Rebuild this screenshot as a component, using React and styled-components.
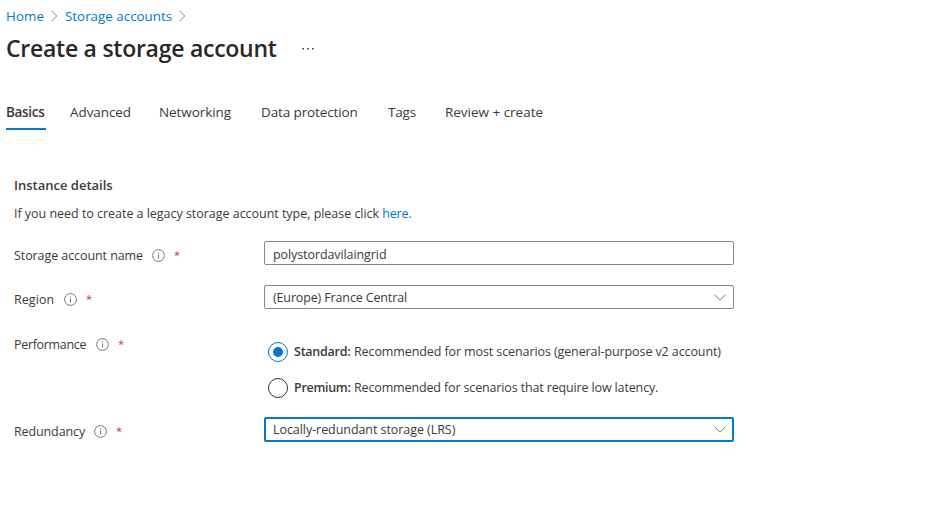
import React from 'react';
import styled, { createGlobalStyle } from 'styled-components';

const GlobalStyle = createGlobalStyle`
  * { box-sizing: border-box; }
  body {
    margin: 0;
    background: #fff;
    color: #3b3a39;
    font-family: "Open Sans", "Noto Sans", sans-serif;
    font-size: 12.5px;
  }
`;

const Page = styled.main`
  width: 948px;
  height: 506px;
  overflow: hidden;
`;

const Breadcrumb = styled.nav`
  display: flex;
  align-items: center;
  height: 20px;
  margin: 6px 0 0 6px;
  font-size: 13.3px;
`;

const Crumb = styled.a`
  width: ${(p) => p.$width}px;
  color: #0078d4;
  letter-spacing: ${(p) => p.$spacing || 0}px;
  line-height: 20px;
  white-space: nowrap;
`;

const CrumbArrow = styled.svg`
  width: 7px;
  height: 12px;
  margin: 0 7px;
  fill: none;
  stroke: #8a8886;
`;

const TitleBar = styled.header`
  display: flex;
  align-items: center;
  height: 36px;
  margin: 5px 0 0 6px;
`;

const Title = styled.h1`
  width: 296px;
  height: 36px;
  margin: 0;
  color: #292827;
  font-size: 23px;
  font-weight: 600;
  letter-spacing: -0.26px;
  line-height: 34px;
  white-space: nowrap;
`;

const MoreIcon = styled.svg`
  width: 12px;
  height: 4px;
  fill: #323130;
`;

const TabList = styled.div`
  display: flex;
  gap: 24px;
  height: 29px;
  margin: 34px 0 0 6px;
`;

const Tab = styled.div`
  width: ${(p) => p.$width}px;
  height: 29px;
  border-bottom: 2px solid ${(p) => (p.$active ? '#0078d4' : 'transparent')};
  font-size: 13.5px;
  font-weight: ${(p) => (p.$active ? 600 : 400)};
  letter-spacing: ${(p) => p.$spacing || 0}px;
  line-height: 22px;
  white-space: nowrap;
`;

const Form = styled.section`
  margin: 45px 0 0 14px;
  width: 720px;
`;

const SectionTitle = styled.h2`
  margin: 0;
  font-size: 13px;
  font-weight: 600;
  line-height: 20px;
`;

const Hint = styled.p`
  margin: 9px 0 17px;
  line-height: 20px;
  letter-spacing: -0.03px;
  white-space: nowrap;
`;

const Link = styled.a`
  color: #0078d4;
  letter-spacing: -0.22px;
`;

const Field = styled.div`
  display: grid;
  grid-template-columns: 250px 470px;
  align-items: start;
  height: ${(p) => p.$height}px;
`;

const Label = styled.div`
  display: flex;
  align-items: center;
  height: 20px;
  margin-top: ${(p) => p.$top}px;
`;

const LabelText = styled.span`
  width: ${(p) => p.$width}px;
  letter-spacing: ${(p) => p.$spacing || 0}px;
  white-space: nowrap;
`;

const InfoSvg = styled.svg`
  width: 13px;
  height: 13px;
  margin-left: 9px;
  fill: none;
  stroke: #6b6967;
  stroke-width: 0.9;
`;

const Required = styled.span`
  margin-left: 9px;
  color: #c4373d;
  font-size: 11px;
  line-height: 20px;
`;

const Control = styled.div`
  display: flex;
  align-items: center;
  justify-content: space-between;
  height: ${(p) => (p.$focused ? 25 : 24)}px;
  padding: ${(p) => (p.$focused ? '0 6px 0 7px' : '0 7px 0 8px')};
  border: ${(p) => (p.$focused ? '2px solid #0078d4' : '1px solid #8a8886')};
  border-radius: 2px;
  white-space: nowrap;
`;

const Value = styled.span`
  padding-top: ${(p) => p.$drop || 0}px;
  letter-spacing: ${(p) => p.$spacing}px;
  line-height: 20px;
`;

const ChevronSvg = styled.svg`
  width: 12px;
  height: 7px;
  fill: none;
  stroke: #797775;
`;

const RadioGroup = styled.div`
  display: flex;
  flex-direction: column;
  gap: 16px;
  padding: 13px 0 0 4px;
`;

const RadioOption = styled.div`
  display: flex;
  height: 20px;
  line-height: 20px;
  white-space: nowrap;
`;

const RadioMark = styled.span`
  display: flex;
  align-items: center;
  justify-content: center;
  width: 20px;
  height: 20px;
  border: 1px solid ${(p) => (p.$checked ? '#0078d4' : '#323130')};
  border-radius: 50%;

  &::after {
    content: '';
    width: 10px;
    height: 10px;
    border-radius: 50%;
    background: ${(p) => (p.$checked ? '#0078d4' : 'transparent')};
  }
`;

const RadioName = styled.strong`
  width: 60px;
  margin-left: 6px;
  font-weight: 600;
  letter-spacing: ${(p) => p.$spacing}px;
`;

const RadioText = styled.span`
  letter-spacing: ${(p) => p.$spacing}px;
`;

const Arrow = () => (
  <CrumbArrow viewBox="0 0 7 12">
    <path d="M0.8 1 5.8 6 0.8 11" />
  </CrumbArrow>
);

const Chevron = () => (
  <ChevronSvg viewBox="0 0 12 7">
    <path d="M0.5 0.7 6 6.2 11.5 0.7" />
  </ChevronSvg>
);

const FieldLabel = ({ text, width, spacing, top }) => (
  <Label $top={top}>
    <LabelText $width={width} $spacing={spacing}>{text}</LabelText>
    <InfoSvg viewBox="0 0 13 13">
      <circle cx="6.5" cy="6.5" r="5.9" />
      <path d="M6.5 5.4V9.5M6.5 3.4V4.5" />
    </InfoSvg>
    <Required>*</Required>
  </Label>
);

const tabs = [
  { text: 'Basics', width: 40, spacing: -0.32, active: true },
  { text: 'Advanced', width: 65, spacing: -0.08 },
  { text: 'Networking', width: 78, spacing: -0.08 },
  { text: 'Data protection', width: 103, spacing: -0.12 },
  { text: 'Tags', width: 33, spacing: -0.18 },
  { text: 'Review + create', width: 100, spacing: -0.02 },
];

export default function App() {
  return (
    <Page>
      <GlobalStyle />
      <Breadcrumb>
        <Crumb $width={38} $spacing={0.1}>Home</Crumb>
        <Arrow />
        <Crumb $width={107} $spacing={0.04}>Storage accounts</Crumb>
        <Arrow />
      </Breadcrumb>
      <TitleBar>
        <Title>Create a storage account</Title>
        <MoreIcon viewBox="0 0 12 4">
          <rect x="0.5" y="1" width="1.5" height="1.5" />
          <rect x="5.2" y="1" width="1.5" height="1.5" />
          <rect x="10" y="1" width="1.5" height="1.5" />
        </MoreIcon>
      </TitleBar>
      <TabList>
        {tabs.map((t) => (
          <Tab key={t.text} $width={t.width} $spacing={t.spacing} $active={t.active}>{t.text}</Tab>
        ))}
      </TabList>
      <Form>
        <SectionTitle>Instance details</SectionTitle>
        <Hint>
          If you need to create a legacy storage account type, please click <Link>here.</Link>
        </Hint>
        <Field $height={44}>
          <FieldLabel text="Storage account name" width={129} spacing={-0.08} top={4} />
          <Control><Value $spacing={-0.09} $drop={4}>polystordavilaingrid</Value></Control>
        </Field>
        <Field $height={44}>
          <FieldLabel text="Region" width={41} spacing={0.05} top={4} />
          <Control><Value $spacing={-0.14} $drop={1}>(Europe) France Central</Value><Chevron /></Control>
        </Field>
        <Field $height={88}>
          <FieldLabel text="Performance" width={73} spacing={-0.32} top={5} />
          <RadioGroup>
            <RadioOption>
              <RadioMark $checked />
              <RadioName $spacing={-0.24}>Standard:</RadioName>
              <RadioText $spacing={-0.1}>Recommended for most scenarios (general-purpose v2 account)</RadioText>
            </RadioOption>
            <RadioOption>
              <RadioMark />
              <RadioName $spacing={-0.3}>Premium:</RadioName>
              <RadioText $spacing={-0.14}>Recommended for scenarios that require low latency.</RadioText>
            </RadioOption>
          </RadioGroup>
        </Field>
        <Field $height={25}>
          <FieldLabel text="Redundancy" width={71} spacing={-0.12} top={4} />
          <Control $focused><Value $spacing={-0.06}>Locally-redundant storage (LRS)</Value><Chevron /></Control>
        </Field>
      </Form>
    </Page>
  );
}
